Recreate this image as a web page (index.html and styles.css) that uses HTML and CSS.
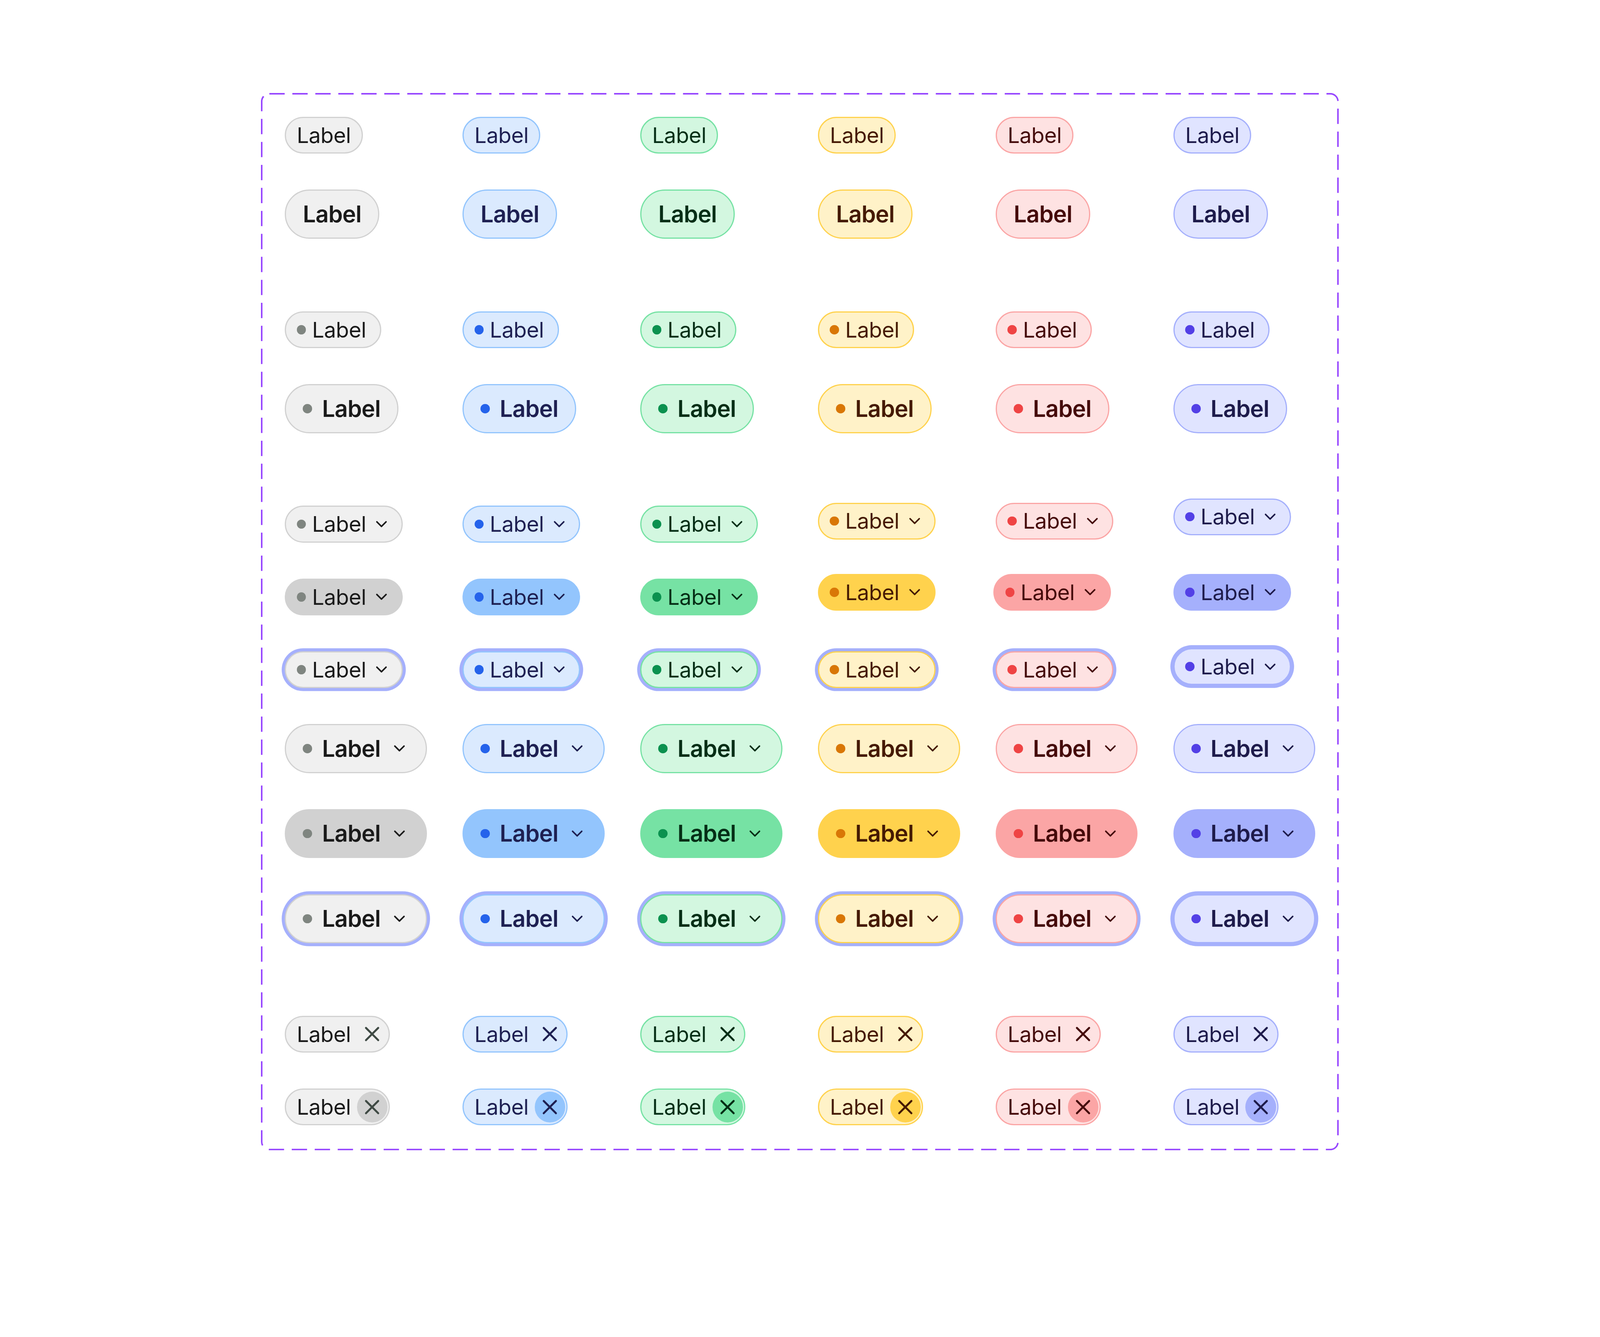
FILE: index.html
```html
<!DOCTYPE html>
<html lang="en">
<head>
<meta charset="utf-8">
<title>Chip component set</title>
<link rel="stylesheet" href="styles.css">
</head>
<body>
<div class="sheet">
  <svg class="frame" viewBox="0 0 703.5 690" width="703.5" height="690" aria-hidden="true"><rect x="0.5" y="0.5" width="702.5" height="689" rx="5" ry="5"/></svg>

  <div class="group">
    <span class="chip sm gray"><span class="txt">Label</span></span>
    <span class="chip sm blue"><span class="txt">Label</span></span>
    <span class="chip sm green"><span class="txt">Label</span></span>
    <span class="chip sm yellow"><span class="txt">Label</span></span>
    <span class="chip sm red"><span class="txt">Label</span></span>
    <span class="chip sm indigo"><span class="txt">Label</span></span>

    <span class="chip lg gray"><span class="txt">Label</span></span>
    <span class="chip lg blue"><span class="txt">Label</span></span>
    <span class="chip lg green"><span class="txt">Label</span></span>
    <span class="chip lg yellow"><span class="txt">Label</span></span>
    <span class="chip lg red"><span class="txt">Label</span></span>
    <span class="chip lg indigo"><span class="txt">Label</span></span>
  </div>

  <div class="group">
    <span class="chip sm dotted gray"><i class="dot"></i><span class="txt">Label</span></span>
    <span class="chip sm dotted blue"><i class="dot"></i><span class="txt">Label</span></span>
    <span class="chip sm dotted green"><i class="dot"></i><span class="txt">Label</span></span>
    <span class="chip sm dotted yellow"><i class="dot"></i><span class="txt">Label</span></span>
    <span class="chip sm dotted red"><i class="dot"></i><span class="txt">Label</span></span>
    <span class="chip sm dotted indigo"><i class="dot"></i><span class="txt">Label</span></span>

    <span class="chip lg dotted gray"><i class="dot"></i><span class="txt">Label</span></span>
    <span class="chip lg dotted blue"><i class="dot"></i><span class="txt">Label</span></span>
    <span class="chip lg dotted green"><i class="dot"></i><span class="txt">Label</span></span>
    <span class="chip lg dotted yellow"><i class="dot"></i><span class="txt">Label</span></span>
    <span class="chip lg dotted red"><i class="dot"></i><span class="txt">Label</span></span>
    <span class="chip lg dotted indigo"><i class="dot"></i><span class="txt">Label</span></span>
  </div>

  <div class="group">
    <span class="chip sm dotted chevd gray"><i class="dot"></i><span class="txt">Label</span><svg class="chev" viewBox="0 0 12 12"><path d="M3 4.5 6 7.5 9 4.5"/></svg></span>
    <span class="chip sm dotted chevd blue"><i class="dot"></i><span class="txt">Label</span><svg class="chev" viewBox="0 0 12 12"><path d="M3 4.5 6 7.5 9 4.5"/></svg></span>
    <span class="chip sm dotted chevd green"><i class="dot"></i><span class="txt">Label</span><svg class="chev" viewBox="0 0 12 12"><path d="M3 4.5 6 7.5 9 4.5"/></svg></span>
    <span class="chip sm dotted chevd yellow up2"><i class="dot"></i><span class="txt">Label</span><svg class="chev" viewBox="0 0 12 12"><path d="M3 4.5 6 7.5 9 4.5"/></svg></span>
    <span class="chip sm dotted chevd red up2"><i class="dot"></i><span class="txt">Label</span><svg class="chev" viewBox="0 0 12 12"><path d="M3 4.5 6 7.5 9 4.5"/></svg></span>
    <span class="chip sm dotted chevd indigo up5"><i class="dot"></i><span class="txt">Label</span><svg class="chev" viewBox="0 0 12 12"><path d="M3 4.5 6 7.5 9 4.5"/></svg></span>

    <span class="chip sm dotted chevd filled gray"><i class="dot"></i><span class="txt">Label</span><svg class="chev" viewBox="0 0 12 12"><path d="M3 4.5 6 7.5 9 4.5"/></svg></span>
    <span class="chip sm dotted chevd filled blue"><i class="dot"></i><span class="txt">Label</span><svg class="chev" viewBox="0 0 12 12"><path d="M3 4.5 6 7.5 9 4.5"/></svg></span>
    <span class="chip sm dotted chevd filled green"><i class="dot"></i><span class="txt">Label</span><svg class="chev" viewBox="0 0 12 12"><path d="M3 4.5 6 7.5 9 4.5"/></svg></span>
    <span class="chip sm dotted chevd filled yellow up3"><i class="dot"></i><span class="txt">Label</span><svg class="chev" viewBox="0 0 12 12"><path d="M3 4.5 6 7.5 9 4.5"/></svg></span>
    <span class="chip sm dotted chevd filled red up3 left2"><i class="dot"></i><span class="txt">Label</span><svg class="chev" viewBox="0 0 12 12"><path d="M3 4.5 6 7.5 9 4.5"/></svg></span>
    <span class="chip sm dotted chevd filled indigo up3"><i class="dot"></i><span class="txt">Label</span><svg class="chev" viewBox="0 0 12 12"><path d="M3 4.5 6 7.5 9 4.5"/></svg></span>

    <span class="chip sm dotted chevd ring gray"><i class="dot"></i><span class="txt">Label</span><svg class="chev" viewBox="0 0 12 12"><path d="M3 4.5 6 7.5 9 4.5"/></svg></span>
    <span class="chip sm dotted chevd ring blue"><i class="dot"></i><span class="txt">Label</span><svg class="chev" viewBox="0 0 12 12"><path d="M3 4.5 6 7.5 9 4.5"/></svg></span>
    <span class="chip sm dotted chevd ring green"><i class="dot"></i><span class="txt">Label</span><svg class="chev" viewBox="0 0 12 12"><path d="M3 4.5 6 7.5 9 4.5"/></svg></span>
    <span class="chip sm dotted chevd ring yellow"><i class="dot"></i><span class="txt">Label</span><svg class="chev" viewBox="0 0 12 12"><path d="M3 4.5 6 7.5 9 4.5"/></svg></span>
    <span class="chip sm dotted chevd ring red"><i class="dot"></i><span class="txt">Label</span><svg class="chev" viewBox="0 0 12 12"><path d="M3 4.5 6 7.5 9 4.5"/></svg></span>
    <span class="chip sm dotted chevd ring indigo up2"><i class="dot"></i><span class="txt">Label</span><svg class="chev" viewBox="0 0 12 12"><path d="M3 4.5 6 7.5 9 4.5"/></svg></span>

    <span class="chip lg dotted chevd gray"><i class="dot"></i><span class="txt">Label</span><svg class="chev" viewBox="0 0 12 12"><path d="M3 4.5 6 7.5 9 4.5"/></svg></span>
    <span class="chip lg dotted chevd blue"><i class="dot"></i><span class="txt">Label</span><svg class="chev" viewBox="0 0 12 12"><path d="M3 4.5 6 7.5 9 4.5"/></svg></span>
    <span class="chip lg dotted chevd green"><i class="dot"></i><span class="txt">Label</span><svg class="chev" viewBox="0 0 12 12"><path d="M3 4.5 6 7.5 9 4.5"/></svg></span>
    <span class="chip lg dotted chevd yellow"><i class="dot"></i><span class="txt">Label</span><svg class="chev" viewBox="0 0 12 12"><path d="M3 4.5 6 7.5 9 4.5"/></svg></span>
    <span class="chip lg dotted chevd red"><i class="dot"></i><span class="txt">Label</span><svg class="chev" viewBox="0 0 12 12"><path d="M3 4.5 6 7.5 9 4.5"/></svg></span>
    <span class="chip lg dotted chevd indigo"><i class="dot"></i><span class="txt">Label</span><svg class="chev" viewBox="0 0 12 12"><path d="M3 4.5 6 7.5 9 4.5"/></svg></span>

    <span class="chip lg dotted chevd filled gray"><i class="dot"></i><span class="txt">Label</span><svg class="chev" viewBox="0 0 12 12"><path d="M3 4.5 6 7.5 9 4.5"/></svg></span>
    <span class="chip lg dotted chevd filled blue"><i class="dot"></i><span class="txt">Label</span><svg class="chev" viewBox="0 0 12 12"><path d="M3 4.5 6 7.5 9 4.5"/></svg></span>
    <span class="chip lg dotted chevd filled green"><i class="dot"></i><span class="txt">Label</span><svg class="chev" viewBox="0 0 12 12"><path d="M3 4.5 6 7.5 9 4.5"/></svg></span>
    <span class="chip lg dotted chevd filled yellow"><i class="dot"></i><span class="txt">Label</span><svg class="chev" viewBox="0 0 12 12"><path d="M3 4.5 6 7.5 9 4.5"/></svg></span>
    <span class="chip lg dotted chevd filled red"><i class="dot"></i><span class="txt">Label</span><svg class="chev" viewBox="0 0 12 12"><path d="M3 4.5 6 7.5 9 4.5"/></svg></span>
    <span class="chip lg dotted chevd filled indigo"><i class="dot"></i><span class="txt">Label</span><svg class="chev" viewBox="0 0 12 12"><path d="M3 4.5 6 7.5 9 4.5"/></svg></span>

    <span class="chip lg dotted chevd ring gray"><i class="dot"></i><span class="txt">Label</span><svg class="chev" viewBox="0 0 12 12"><path d="M3 4.5 6 7.5 9 4.5"/></svg></span>
    <span class="chip lg dotted chevd ring blue"><i class="dot"></i><span class="txt">Label</span><svg class="chev" viewBox="0 0 12 12"><path d="M3 4.5 6 7.5 9 4.5"/></svg></span>
    <span class="chip lg dotted chevd ring green"><i class="dot"></i><span class="txt">Label</span><svg class="chev" viewBox="0 0 12 12"><path d="M3 4.5 6 7.5 9 4.5"/></svg></span>
    <span class="chip lg dotted chevd ring yellow"><i class="dot"></i><span class="txt">Label</span><svg class="chev" viewBox="0 0 12 12"><path d="M3 4.5 6 7.5 9 4.5"/></svg></span>
    <span class="chip lg dotted chevd ring red"><i class="dot"></i><span class="txt">Label</span><svg class="chev" viewBox="0 0 12 12"><path d="M3 4.5 6 7.5 9 4.5"/></svg></span>
    <span class="chip lg dotted chevd ring indigo"><i class="dot"></i><span class="txt">Label</span><svg class="chev" viewBox="0 0 12 12"><path d="M3 4.5 6 7.5 9 4.5"/></svg></span>
  </div>

  <div class="group">
    <span class="chip sm closable gray"><span class="txt">Label</span><span class="xbtn"><svg viewBox="0 0 12 12"><path d="M2 2 10 10M10 2 2 10"/></svg></span></span>
    <span class="chip sm closable blue"><span class="txt">Label</span><span class="xbtn"><svg viewBox="0 0 12 12"><path d="M2 2 10 10M10 2 2 10"/></svg></span></span>
    <span class="chip sm closable green"><span class="txt">Label</span><span class="xbtn"><svg viewBox="0 0 12 12"><path d="M2 2 10 10M10 2 2 10"/></svg></span></span>
    <span class="chip sm closable yellow"><span class="txt">Label</span><span class="xbtn"><svg viewBox="0 0 12 12"><path d="M2 2 10 10M10 2 2 10"/></svg></span></span>
    <span class="chip sm closable red"><span class="txt">Label</span><span class="xbtn"><svg viewBox="0 0 12 12"><path d="M2 2 10 10M10 2 2 10"/></svg></span></span>
    <span class="chip sm closable indigo"><span class="txt">Label</span><span class="xbtn"><svg viewBox="0 0 12 12"><path d="M2 2 10 10M10 2 2 10"/></svg></span></span>

    <span class="chip sm closable hovered gray"><span class="txt">Label</span><span class="xbtn"><svg viewBox="0 0 12 12"><path d="M2 2 10 10M10 2 2 10"/></svg></span></span>
    <span class="chip sm closable hovered blue"><span class="txt">Label</span><span class="xbtn"><svg viewBox="0 0 12 12"><path d="M2 2 10 10M10 2 2 10"/></svg></span></span>
    <span class="chip sm closable hovered green"><span class="txt">Label</span><span class="xbtn"><svg viewBox="0 0 12 12"><path d="M2 2 10 10M10 2 2 10"/></svg></span></span>
    <span class="chip sm closable hovered yellow"><span class="txt">Label</span><span class="xbtn"><svg viewBox="0 0 12 12"><path d="M2 2 10 10M10 2 2 10"/></svg></span></span>
    <span class="chip sm closable hovered red"><span class="txt">Label</span><span class="xbtn"><svg viewBox="0 0 12 12"><path d="M2 2 10 10M10 2 2 10"/></svg></span></span>
    <span class="chip sm closable hovered indigo"><span class="txt">Label</span><span class="xbtn"><svg viewBox="0 0 12 12"><path d="M2 2 10 10M10 2 2 10"/></svg></span></span>
  </div>
</div>
</body>
</html>
```

FILE: styles.css
```css
html, body {
  margin: 0;
  padding: 0;
  background: #ffffff;
}

body {
  zoom: 3.922;
  font-family: Inter, "Noto Sans", "Liberation Sans", sans-serif;
}

.sheet {
  position: relative;
  box-sizing: border-box;
  width: 703.5px;
  height: 690px;
  margin: 60.6px auto 0;
  padding: 15.65px 15.5px 15.9px;
  display: flex;
  flex-direction: column;
  gap: 47.4px;
}

.frame {
  position: absolute;
  left: 0;
  top: 0;
  overflow: visible;
  pointer-events: none;
}

.frame rect {
  fill: none;
  stroke: #9747FF;
  stroke-width: 1;
  stroke-dasharray: 10 5;
}

.group {
  display: grid;
  grid-template-columns: repeat(5, 116px) 1fr;
  row-gap: 23.5px;
  align-items: start;
  justify-items: start;
}

/* colour themes */
.gray   { --bg: #F0F0F0; --bd: #D1D1D1; --fill: #D1D1D1; --fg: #1A1A1A; --dot: #7F8580; --x: #3F4A44; }
.blue   { --bg: #DBEAFE; --bd: #93C5FD; --fill: #93C5FD; --fg: #1E2052; --dot: #2563EB; --x: #1E2052; }
.green  { --bg: #D3F7E0; --bd: #76E2A4; --fill: #76E2A4; --fg: #052E16; --dot: #0B914F; --x: #052E16; }
.yellow { --bg: #FFF2C8; --bd: #FFD24D; --fill: #FFD24D; --fg: #451A03; --dot: #D97706; --x: #451A03; }
.red    { --bg: #FEE2E2; --bd: #FBA5A5; --fill: #FBA5A5; --fg: #450A0A; --dot: #EF4444; --x: #450A0A; }
.indigo { --bg: #E0E4FF; --bd: #A5B0FC; --fill: #A5B0FC; --fg: #1E1B4B; --dot: #5340E6; --x: #1E1B4B; }

.chip {
  box-sizing: border-box;
  display: inline-flex;
  align-items: center;
  border: 1px solid var(--bd);
  border-radius: 999px;
  background: var(--bg);
  color: var(--fg);
  white-space: nowrap;
}

.txt {
  display: block;
}

.sm {
  height: 24px;
  padding: 0 7px;
  font-size: 14px;
  font-weight: 400;
  line-height: 20px;
  letter-spacing: -0.12px;
}

.lg {
  height: 32px;
  padding: 0 11px;
  font-size: 15px;
  font-weight: 600;
  line-height: 20px;
  letter-spacing: -0.22px;
}

.dot {
  display: block;
  flex: none;
  width: 6px;
  height: 6px;
  border-radius: 50%;
  background: var(--dot);
}

.sm.dotted { padding-right: 9px; }
.sm .dot { margin-right: 4px; }
.lg .dot { margin-right: 6.5px; }

.chev {
  display: block;
  flex: none;
  width: 12px;
  height: 12px;
  fill: none;
  stroke: currentColor;
  stroke-width: 1;
  stroke-linecap: round;
  stroke-linejoin: round;
}

.sm.chevd { padding-right: 7px; }
.sm .chev { margin-left: 4px; }
.lg.chevd { padding-right: 11px; }
.lg .chev { margin-left: 6.5px; }

.filled {
  background: var(--fill);
  border-color: var(--fill);
}

.ring {
  box-shadow: 0 0 0 2px #A5B0FC;
}

/* closable chips */
.sm.closable {
  padding: 0 0.7px 0 7px;
}

.xbtn {
  display: flex;
  flex: none;
  align-items: center;
  justify-content: center;
  width: 20px;
  height: 20px;
  margin-left: 4px;
  border-radius: 50%;
  color: var(--x);
}

.hovered .xbtn {
  background: var(--fill);
}

.xbtn svg {
  display: block;
  width: 12px;
  height: 12px;
  fill: none;
  stroke: currentColor;
  stroke-width: 1.3;
  stroke-linecap: round;
}

/* small placement irregularities of the source sheet */
.up2 { margin-top: -2px; }
.up3 { margin-top: -3px; }
.up5 { margin-top: -4.8px; }
.left2 { margin-left: -1.5px; }
```
